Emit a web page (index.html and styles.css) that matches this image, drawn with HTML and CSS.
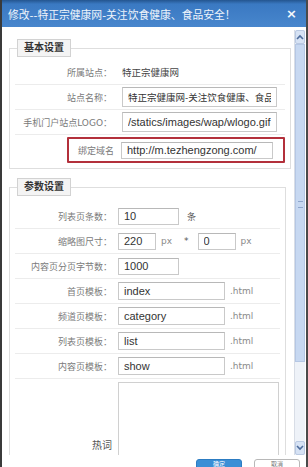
FILE: index.html
```html
<!DOCTYPE html>
<html lang="zh-CN">
<head>
    <meta charset="UTF-8">
    <meta name="viewport" content="width=device-width, initial-scale=1.0">
    <title>修改站点</title>
    <link rel="stylesheet" href="styles.css">
</head>
<body>
    <div class="dialog">
        <div class="titlebar">
            <span class="title">修改--特正宗健康网-关注饮食健康、食品安全！</span>
            <span class="close">×</span>
        </div>

        <div class="main">
            <div class="content">
                <fieldset class="box box-base">
                    <legend>基本设置</legend>
                    <div class="row">
                        <label>所属站点：</label>
                        <span class="value">特正宗健康网</span>
                    </div>
                    <div class="row">
                        <label>站点名称：</label>
                        <input class="text wide cjk" type="text" value="特正宗健康网-关注饮食健康、食品安全！">
                    </div>
                    <div class="row">
                        <label>手机门户站点LOGO：</label>
                        <input class="text wide" type="text" value="/statics/images/wap/wlogo.gif">
                    </div>
                    <div class="row row-mark">
                        <div class="mark">
                            <label>绑定域名</label>
                            <input class="text domain" type="text" value="http://m.tezhengzong.com/">
                        </div>
                    </div>
                </fieldset>

                <fieldset class="box box-param">
                    <legend>参数设置</legend>
                    <div class="row">
                        <label>列表页条数：</label>
                        <div class="field">
                            <input class="text small" type="text" value="10">
                            <span class="unit dark">条</span>
                        </div>
                    </div>
                    <div class="row">
                        <label>缩略图尺寸：</label>
                        <div class="field">
                            <input class="text tiny" type="text" value="220">
                            <span class="unit">px</span>
                            <span class="unit star">*</span>
                            <input class="text tiny" type="text" value="0">
                            <span class="unit">px</span>
                        </div>
                    </div>
                    <div class="row">
                        <label>内容页分页字节数：</label>
                        <div class="field">
                            <input class="text small" type="text" value="1000">
                        </div>
                    </div>
                    <div class="row">
                        <label>首页模板：</label>
                        <div class="field">
                            <input class="text tpl" type="text" value="index">
                            <span class="unit">.html</span>
                        </div>
                    </div>
                    <div class="row">
                        <label>频道页模板：</label>
                        <div class="field">
                            <input class="text tpl" type="text" value="category">
                            <span class="unit">.html</span>
                        </div>
                    </div>
                    <div class="row">
                        <label>列表页模板：</label>
                        <div class="field">
                            <input class="text tpl" type="text" value="list">
                            <span class="unit">.html</span>
                        </div>
                    </div>
                    <div class="row">
                        <label>内容页模板：</label>
                        <div class="field">
                            <input class="text tpl" type="text" value="show">
                            <span class="unit">.html</span>
                        </div>
                    </div>
                    <div class="row row-area">
                        <label class="hot">热词</label>
                        <textarea class="area"></textarea>
                    </div>
                </fieldset>
            </div>

            <div class="scrollbar">
                <div class="sb-btn">
                    <svg width="8" height="6" viewBox="0 0 8 6"><path d="M1 5 L4 2 L7 5" fill="none" stroke="#4d6c9c" stroke-width="1.6"/></svg>
                </div>
                <div class="sb-thumb"><span class="grip"></span></div>
                <div class="sb-track"></div>
                <div class="sb-btn">
                    <svg width="8" height="6" viewBox="0 0 8 6"><path d="M1 1 L4 4 L7 1" fill="none" stroke="#4d6c9c" stroke-width="1.6"/></svg>
                </div>
            </div>
        </div>

        <div class="footer">
            <button class="btn btn-ok">确定</button>
            <button class="btn btn-cancel">取消</button>
        </div>
    </div>
</body>
</html>
```

FILE: styles.css
```css
body {
    margin: 0;
    font-family: "DejaVu Sans", "Noto Sans CJK SC", sans-serif;
    background: #fff;
}

.dialog {
    height: 467px;
    display: flex;
    flex-direction: column;
    border-left: 2px solid #3a3a3a;
    border-right: 2px solid #4a4a4a;
    overflow: hidden;
    background: #fff;
}

.titlebar {
    height: 27px;
    flex: none;
    display: flex;
    align-items: center;
    justify-content: space-between;
    padding: 0 9px 0 6px;
    background: linear-gradient(#24558f 0, #3a79c2 15%, #4886cd 100%);
    color: #fff;
}

.title {
    font-size: 10.8px;
    color: #eef4fb;
}

.close {
    font-size: 13px;
    font-weight: bold;
    color: #f4f8fc;
}

.main {
    height: 428px;
    flex: none;
    display: flex;
}

.content {
    flex: 1;
    padding: 12px 8px 0 7px;
    overflow: hidden;
}

.box {
    margin: 0;
    padding: 0 3px 5px;
    border: 1px solid #dedede;
}

.box legend {
    margin-left: 4px;
    padding: 0 6px;
    line-height: 16px;
    font-size: 10px;
    font-weight: bold;
    color: #333;
    background: #f4f4f4;
    border: 1px solid #d2d2d2;
}

.box-param {
    margin-top: 9px;
}

.row {
    display: grid;
    grid-template-columns: 97px 1fr;
    column-gap: 10px;
    align-items: center;
    height: 24px;
    margin: 0 2px;
    border-bottom: 1px solid #ececec;
}

.box-base .row:first-of-type {
    margin-top: 3px;
}

.box-param .row {
    column-gap: 6px;
}

.box-param .row:first-of-type {
    margin-top: 8px;
}

label {
    text-align: right;
    font-size: 9px;
    color: #7a7a7a;
    white-space: nowrap;
}

.value {
    font-size: 9.5px;
    color: #444;
}

.text {
    box-sizing: border-box;
    height: 20px;
    padding: 0 5px;
    border: 1px solid #c9c9c9;
    border-top-color: #b8b8b8;
    font-family: "Liberation Sans", "Noto Sans CJK SC", sans-serif;
    font-size: 11px;
    color: #333;
    background: #fff;
}

.cjk {
    font-size: 9.5px;
}

.wide {
    width: 155px;
}

.row-mark {
    display: block;
    height: 26px;
    margin-top: 2px;
    border-bottom: none;
}

.mark {
    box-sizing: border-box;
    display: flex;
    align-items: center;
    gap: 8px;
    width: 218px;
    height: 26px;
    margin-left: 52px;
    padding-left: 9px;
    border: 2px solid #b3303b;
    border-radius: 1px;
}

.mark label {
    width: 35px;
}

.domain {
    width: 152px;
    height: 17px;
}

.field {
    display: flex;
    align-items: center;
}

.small {
    width: 61px;
    height: 17px;
}

.tiny {
    width: 38px;
    height: 17px;
}

.tpl {
    width: 107px;
    height: 18px;
}

.unit {
    margin-left: 5px;
    font-size: 9px;
    color: #8a8a8a;
}

.unit.dark {
    margin-left: 8px;
    color: #555;
}

.unit.star {
    margin: 0 9px 0 12px;
    color: #555;
}

.row-area {
    height: 120px;
    align-items: start;
    border-bottom: none;
}

.hot {
    align-self: center;
    padding-top: 8px;
    font-size: 10px;
    color: #555;
}

.area {
    box-sizing: border-box;
    width: 161px;
    height: 120px;
    margin-top: 3px;
    border: 1px solid #d0d0d0;
    resize: none;
}

.scrollbar {
    width: 10px;
    margin: 3px 1px 0 0;
    display: flex;
    flex-direction: column;
    background: #eef2f8;
    border-left: 1px solid #d8dde6;
}

.sb-btn {
    height: 12px;
    flex: none;
    display: flex;
    align-items: center;
    justify-content: center;
    background: #d6e2f4;
    border: 1px solid #b9c9e2;
    border-radius: 2px;
}

.sb-thumb {
    height: 318px;
    flex: none;
    display: flex;
    justify-content: center;
    padding-top: 156px;
    box-sizing: border-box;
    background: #c7d8f1;
    border: 1px solid #b5c7e4;
}

.grip {
    width: 5px;
    height: 5px;
    border-top: 1px solid #8ea6cc;
    border-bottom: 1px solid #8ea6cc;
}

.sb-track {
    flex: 1;
}

.footer {
    flex: none;
    display: flex;
    justify-content: flex-end;
    gap: 12px;
    padding: 4px 6px 0 0;
    background: #fff;
}

.btn {
    box-sizing: border-box;
    width: 46px;
    height: 20px;
    padding: 1px 0 12px;
    line-height: 6px;
    font-family: "DejaVu Sans", "Noto Sans CJK SC", sans-serif;
    font-size: 6px;
    border-radius: 3px;
}

.btn-ok {
    color: #fff;
    background: #3a8fd6;
    border: 1px solid #2c7cc2;
}

.btn-cancel {
    color: #777;
    background: #fff;
    border: 1px solid #b8b8b8;
}
```
